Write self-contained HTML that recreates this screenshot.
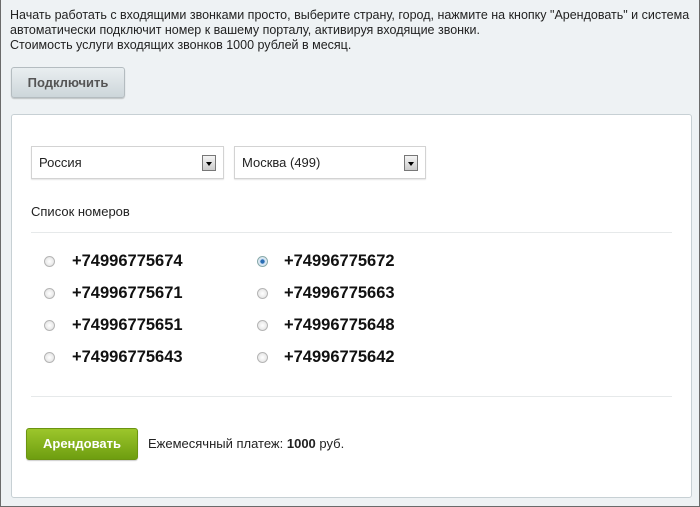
<!DOCTYPE html>
<html><head><meta charset="utf-8"><style>
*{margin:0;padding:0;box-sizing:border-box}
body{width:700px;height:507px;overflow:hidden;font-family:"Liberation Sans",Arial,sans-serif;font-size:12px;color:#000}
.wrap{position:absolute;left:0;top:0;width:700px;height:507px;background:#eef2f4;border:1px solid #6b6b6b;border-top:none}
.p{position:absolute;left:9px;top:8px;line-height:15px;font-size:12.5px;color:#222}
.btn1{position:absolute;left:10px;top:67px;width:114px;height:31px;border:1px solid #b4bcc0;border-radius:3px;background:linear-gradient(#e9eef0,#cdd6da);box-shadow:0 1px 1px rgba(0,0,0,.2);font-weight:bold;font-size:13px;color:#555;text-align:center;line-height:29px}
.panel{position:absolute;left:10px;top:114px;width:681px;height:384px;background:#fff;border:1px solid #c7d0d4;border-radius:3px}
.sel{position:absolute;top:31px;height:33px;border:1px solid #d3d3d3;box-shadow:0 1px 1px #e6e6e6;font-size:13px;line-height:31px;padding-left:7px;color:#222}
.arr{position:absolute;right:7px;top:8px;width:14px;height:16px;border:1px solid #777;background:linear-gradient(#f4f4f4,#ccc)}
.arr:after{content:"";position:absolute;left:3px;top:6px;border:3px solid transparent;border-top:4px solid #000}
.lbl{position:absolute;left:19px;top:89px;font-size:13px;color:#222}
.hr{position:absolute;left:19px;width:641px;height:1px;background:#e6e9ea}
.r{position:absolute;width:11px;height:11px;border-radius:50%;border:1px solid #b5b5b5;background:radial-gradient(#fff,#ddd)}
.r.on{background:radial-gradient(#2a6eb5 28%,#cfe2f3 40%,#f4f4f4);border-color:#8aa}
.n{position:absolute;font-weight:bold;font-size:16.5px;color:#111}
.btn2{position:absolute;left:14px;top:313px;width:112px;height:32px;border-radius:3px;background:linear-gradient(#9cc62b,#6e9e10);border:1px solid #6b9411;box-shadow:0 1px 1px rgba(0,0,0,.2);color:#fff;font-weight:bold;font-size:13px;text-align:center;line-height:30px}
.pay{position:absolute;left:136px;top:321px;font-size:13px;color:#222}
</style></head><body><div class="wrap">
<div class="p">Начать работать с входящими звонками просто, выберите страну, город, нажмите на кнопку "Арендовать" и система<br>автоматически подключит номер к вашему порталу, активируя входящие звонки.<br>Стоимость услуги входящих звонков 1000 рублей в месяц.</div>
<div class="btn1">Подключить</div>
<div class="panel">
<div class="sel" style="left:19px;width:193px">Россия<div class="arr"></div></div>
<div class="sel" style="left:222px;width:192px">Москва (499)<div class="arr"></div></div>
<div class="lbl">Список номеров</div>
<div class="hr" style="top:117px"></div>
<div class="r" style="left:32px;top:141px"></div><div class="n" style="left:60px;top:137px">+74996775674</div>
<div class="r on" style="left:245px;top:141px"></div><div class="n" style="left:272px;top:137px">+74996775672</div>
<div class="r" style="left:32px;top:173px"></div><div class="n" style="left:60px;top:169px">+74996775671</div>
<div class="r" style="left:245px;top:173px"></div><div class="n" style="left:272px;top:169px">+74996775663</div>
<div class="r" style="left:32px;top:205px"></div><div class="n" style="left:60px;top:201px">+74996775651</div>
<div class="r" style="left:245px;top:205px"></div><div class="n" style="left:272px;top:201px">+74996775648</div>
<div class="r" style="left:32px;top:237px"></div><div class="n" style="left:60px;top:233px">+74996775643</div>
<div class="r" style="left:245px;top:237px"></div><div class="n" style="left:272px;top:233px">+74996775642</div>
<div class="hr" style="top:281px"></div>
<div class="btn2">Арендовать</div>
<div class="pay">Ежемесячный платеж: <b>1000</b> руб.</div>
</div>
</div></body></html>
